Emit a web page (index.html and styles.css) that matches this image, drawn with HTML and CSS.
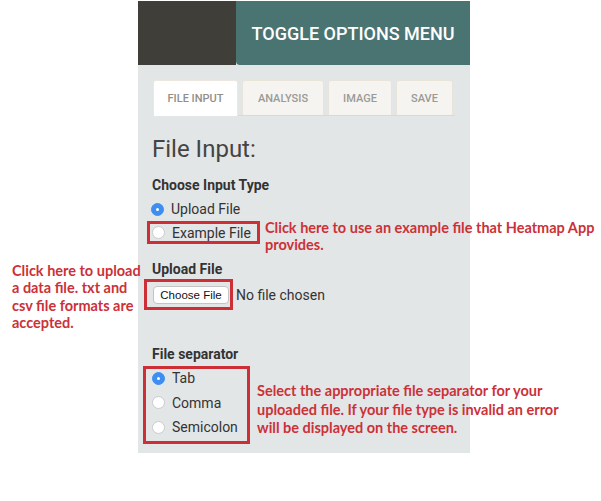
FILE: index.html
```html
<!DOCTYPE html>
<html>
<head>
<meta charset="utf-8">
<link rel="stylesheet" href="styles.css">
</head>
<body>
<div class="canvas">
  <div class="panel">
    <header class="topbar">
      <div class="brand"></div>
      <div class="toggle">TOGGLE OPTIONS MENU</div>
    </header>
    <div class="content">
      <ul class="tabs">
        <li class="tab active">FILE INPUT</li>
        <li class="tab tab-analysis">ANALYSIS</li>
        <li class="tab tab-image">IMAGE</li>
        <li class="tab tab-save">SAVE</li>
      </ul>
      <h2 class="title">File Input:</h2>
      <div class="group">
        <div class="label">Choose Input Type</div>
        <div class="radio"><span class="dot on"></span>Upload File</div>
        <div class="hl hl-example">
          <div class="radio"><span class="dot"></span>Example File</div>
        </div>
      </div>
      <div class="group group-upload">
        <div class="label">Upload File</div>
        <div class="file-row">
          <div class="hl hl-upload"><span class="btn">Choose File</span></div>
          <span class="nofile">No file chosen</span>
        </div>
      </div>
      <div class="group group-sep">
        <div class="label">File separator</div>
        <div class="hl hl-sep">
          <div class="radio"><span class="dot on"></span>Tab</div>
          <div class="radio"><span class="dot"></span>Comma</div>
          <div class="radio"><span class="dot"></span>Semicolon</div>
        </div>
      </div>
    </div>
  </div>
  <p class="note note-example">Click here to use an example file that Heatmap App<br>provides.</p>
  <p class="note note-upload">Click here to upload<br>a data file. txt and<br>csv file formats are<br>accepted.</p>
  <p class="note note-sep">Select the appropriate file separator for your<br>uploaded file. If your file type is invalid an error<br>will be displayed on the screen.</p>
</div>
</body>
</html>
```
FILE: styles.css
```css
* { box-sizing: border-box; }
html, body { margin: 0; padding: 0; background: #ffffff; }
body { font-family: Roboto, "Liberation Sans", sans-serif; color: #333; }

.canvas { position: relative; width: 601px; height: 501px; padding-top: 1px; }

.panel {
  margin-left: 138px;
  width: 332px;
  height: 452px;
  background: #e3e6e7;
}

.topbar { display: flex; height: 64px; }
.brand { width: 98px; background: #3f3e39; }
.toggle {
  flex: 1;
  background: #4a7472;
  border-bottom-left-radius: 4px;
  color: #fff;
  font-weight: 500;
  font-size: 18px;
  display: flex;
  align-items: center;
  justify-content: center;
  padding-top: 1px;
}

.content { padding: 15px 0 0 14px; }

.tabs {
  list-style: none;
  margin: 0 15px 0 1px;
  padding: 0;
  display: flex;
  gap: 4px;
  border-bottom: 1px solid #ddd9d0;
  height: 36px;
}
.tab {
  height: 35px;
  border: 1px solid #e9e4da;
  border-bottom: none;
  border-radius: 3px 3px 0 0;
  background: #f6f4f0;
  color: #9a9a96;
  font-size: 11px;
  font-weight: 500;
  display: flex;
  align-items: center;
  justify-content: center;
}
.tab.active { width: 85px; background: #fff; color: #8f8f8b; height: 36px; border-color: #ece8e0; }
.tab-analysis { width: 82px; }
.tab-image { width: 64px; }
.tab-save { width: 57px; }

.title {
  margin: 19px 0 0 0;
  font-size: 24px;
  font-weight: 400;
  color: #444;
  line-height: 28px;
}

.group { margin-top: 12px; }
.label { font-weight: 700; font-size: 14px; color: #333; line-height: 20px; }

.radio {
  display: flex;
  align-items: center;
  font-size: 14px;
  color: #333;
  height: 24px;
  margin-top: 2px;
}
.dot {
  width: 13px;
  height: 13px;
  border-radius: 50%;
  background: #fff;
  border: 1px solid #cbcbcb;
  margin: 0 7px 0 -1px;
  flex: none;
  position: relative;
}
.dot.on { background: #3d8ef0; border-color: #3d8ef0; }
.dot.on::after {
  content: "";
  position: absolute;
  left: 4px; top: 4px;
  width: 3px; height: 3px;
  border-radius: 50%;
  background: #fff;
}

.hl { border: 3px solid #cc2f35; }
.hl-example {
  display: inline-flex;
  margin-left: -5px;
  padding: 0 6px 0 3px;
  height: 23px;
  align-items: center;
}
.hl-example .radio { margin-top: 0; height: 17px; }

.group-upload { margin-top: 15px; }
.file-row { display: flex; align-items: center; margin-top: 0; }
.hl-upload {
  display: inline-flex;
  margin-left: -8px;
  padding: 4px 1px 3px 6px;
  height: 31px;
  align-items: center;
}
.btn {
  display: inline-flex;
  align-items: center;
  justify-content: center;
  width: 76px;
  height: 18px;
  background: #fff;
  border: 1px solid #c4c4c4;
  border-radius: 4px;
  font-family: "Liberation Sans", Arial, sans-serif;
  font-size: 11.5px;
  color: #111;
}
.nofile { font-size: 14px; color: #333; margin-left: 3px; }

.group-sep { margin-top: 34px; }
.hl-sep {
  width: 107px;
  margin-left: -9px;
  margin-top: 2px;
  padding: 0 0 0 7px;
  height: 78px;
  display: flex;
  flex-direction: column;
  gap: 6.5px;
}
.hl-sep .radio { height: 18px; margin-top: 0; }

.note {
  position: absolute;
  margin: 0;
  font-family: Lato, "Open Sans", sans-serif;
  font-weight: 700;
  font-size: 14.5px;
  color: #cc3138;
}
.note-example { left: 265px; top: 219px; line-height: 17px; }
.note-upload { left: 12px; top: 262px; line-height: 17.3px; }
.note-sep { left: 257px; top: 382px; line-height: 18.5px; }
```
